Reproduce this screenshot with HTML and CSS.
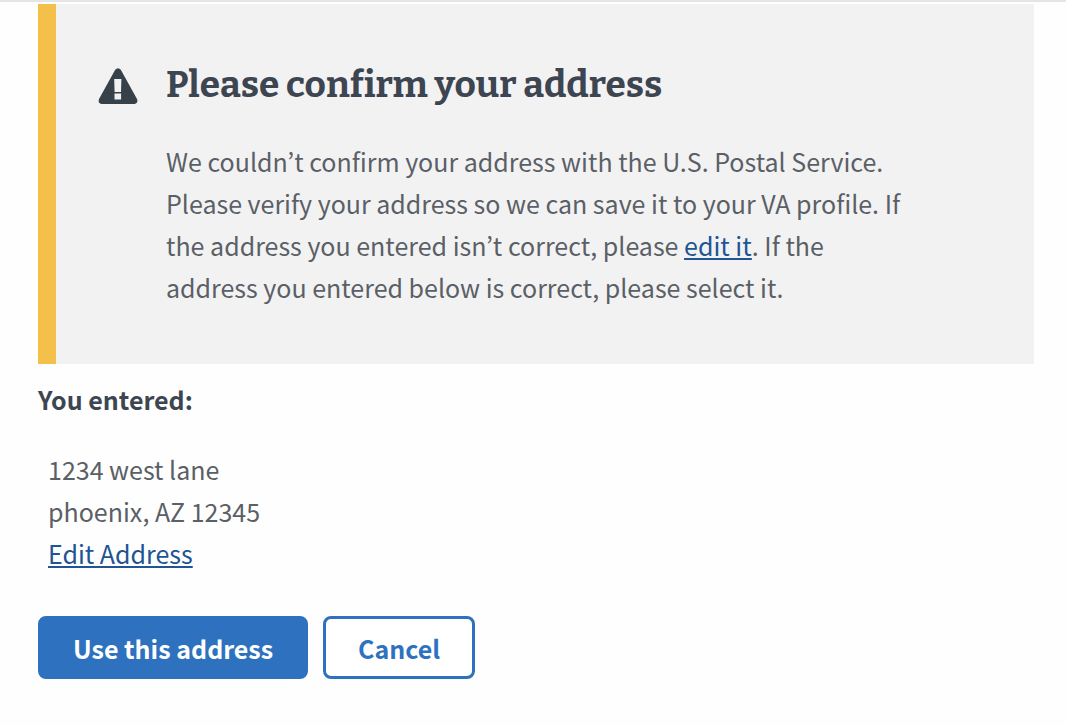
FILE: index.html
```html
<!DOCTYPE html>
<html lang="en">
<head>
<meta charset="utf-8">
<meta name="viewport" content="width=device-width, initial-scale=1">
<title>Confirm your address</title>
<link rel="stylesheet" href="styles.css">
</head>
<body>
<main class="page">
  <section class="alert">
    <svg class="alert-icon" viewBox="0 0 40 36" aria-hidden="true">
      <path class="icon-shape" d="M17.2 1.8Q20 -1.4 22.8 1.8L39 31Q40.500 35.500 36 36H4Q-.5 35.500 1 31Z"/>
      <path class="icon-mark" d="M16.200 11h7.200l-.4 13h-6.400zM16.500 25.500h6.600v6h-6.600z"/>
    </svg>
    <div class="alert-body">
      <h1 class="alert-title">Please confirm your address</h1>
      <p class="alert-text">We couldn’t confirm your address with the U.S. Postal Service. Please verify your address so we can save it to your VA profile. If the address you entered isn’t correct, please <a class="link" href="#">edit it</a>. If the address you entered below is correct, please select it.</p>
    </div>
  </section>
  <h2 class="entered-title">You entered:</h2>
  <address class="address">
    <span>1234 west lane</span>
    <span>phoenix, AZ 12345</span>
    <a class="link" href="#">Edit Address</a>
  </address>
  <div class="actions">
    <button class="button button-primary" type="button">Use this address</button>
    <button class="button button-secondary" type="button">Cancel</button>
  </div>
</main>
</body>
</html>
```
FILE: styles.css
```css
* { box-sizing: border-box; }
body {
  margin: 0;
  background: #fefefe;
  color: #5b5f66;
  font-family: "Noto Sans CJK KR", "Noto Sans", sans-serif;
  font-size: 25px;
  line-height: 42px;
}
.page {
  border-top: 2px solid #e4e5e7;
  padding: 2px 32px 48px 38px;
}
.alert {
  display: flex;
  gap: 28px;
  padding: 57px 120px 56px 42px;
  border-left: 18px solid #f4c04a;
  background: #f2f2f3;
}
.alert-icon { flex: none; width: 40px; height: 36px; margin-top: 7px; }
.icon-shape { fill: #37414a; }
.icon-mark { fill: #f2f2f3; }
.alert-title {
  margin: 0 0 31px;
  color: #3d4551;
  font-family: Bitter, "DejaVu Serif", serif;
  font-size: 37px;
  line-height: 48px;
}
.alert-text { margin: 0; }
.link { color: #205493; text-decoration: underline; }
.entered-title { margin: 14px 0 28px; color: #3d4551; font-size: 25px; line-height: 42px; }
.address { display: flex; flex-direction: column; align-items: flex-start; padding-left: 10px; font-style: normal; }
.actions { display: flex; gap: 15px; margin-top: 42px; }
.button {
  height: 63px;
  padding: 0 32px;
  border: 3px solid #2e72bf;
  border-radius: 8px;
  font: bold 25px/32px "Noto Sans CJK KR", "Noto Sans", sans-serif;
}
.button-primary { background: #2e72bf; color: #fff; }
.button-secondary { background: #fff; color: #2e72bf; }
```
